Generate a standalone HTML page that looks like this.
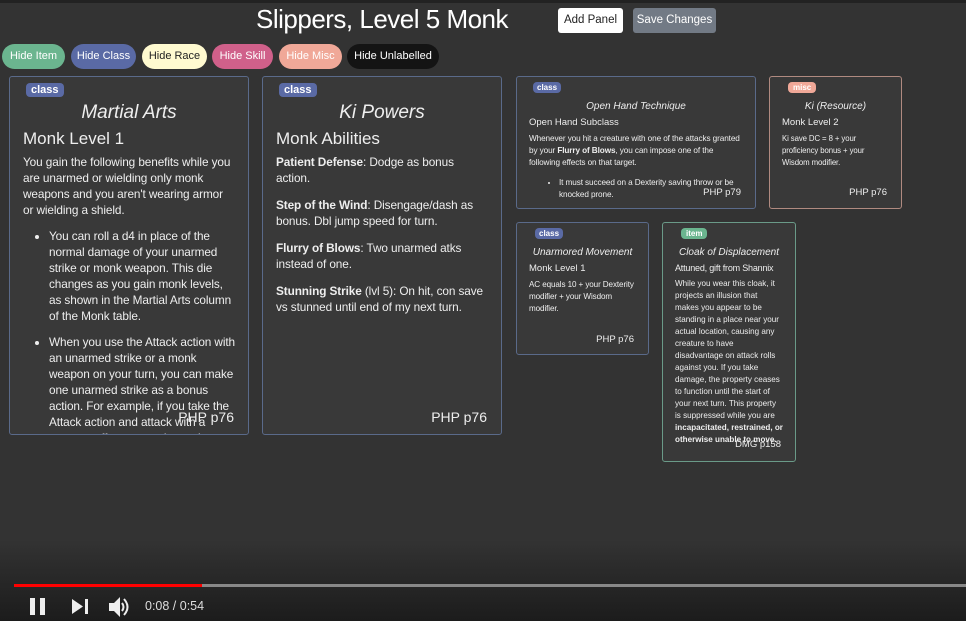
<!DOCTYPE html>
<html><head><meta charset="utf-8"><style>
*{box-sizing:border-box;margin:0;padding:0}
body{width:966px;height:621px;overflow:hidden;background:#333;font-family:"Liberation Sans",sans-serif;color:#eee;position:relative}
.top{position:absolute;left:0;top:0;width:966px;height:3px;background:#222}
h1{position:absolute;left:256px;top:4px;font-size:26px;font-weight:normal;color:#fff;letter-spacing:-0.5px}
.btn{position:absolute;top:8px;height:25px;border-radius:3px;font-size:11.5px;line-height:25px;text-align:center}
.pill{position:absolute;top:44px;height:25px;border-radius:13px;font-size:11px;line-height:25px;text-align:center}
.card{position:absolute;background:#393939;border:1px solid #5a6a8a;border-radius:3px;overflow:hidden;padding:0 14px}
.tag{display:inline-block;border-radius:4px;font-weight:bold;color:#fff;background:#5a6aa5}
.ttl{font-style:italic;text-align:center}
.ft{position:absolute;right:14px}
ul{padding-left:26px}
.big{font-size:11.8px;line-height:16px;letter-spacing:-0.1px}
.sm{font-size:7.8px;line-height:12px;letter-spacing:-0.1px}
</style></head><body>
<div class="top"></div>
<h1>Slippers, Level 5 Monk</h1>
<div class="btn" style="left:558px;width:65px;background:#fff;color:#222">Add Panel</div>
<div class="btn" style="left:633px;width:83px;background:#727a85;color:#fff">Save Changes</div>
<div class="pill" style="left:2px;width:63px;background:#6bb58f;color:#fff">Hide Item</div>
<div class="pill" style="left:71px;width:65px;background:#5a6aa5;color:#fff">Hide Class</div>
<div class="pill" style="left:142px;width:65px;background:#fffad0;color:#222">Hide Race</div>
<div class="pill" style="left:212px;width:61px;background:#d0608a;color:#fff">Hide Skill</div>
<div class="pill" style="left:279px;width:63px;background:#f0a898;color:#fff">Hide Misc</div>
<div class="pill" style="left:347px;width:92px;background:#141414;color:#fff">Hide Unlabelled</div>

<div class="card" style="left:9px;top:76px;width:240px;height:359px;padding:0 13px">
<span class="tag" style="margin:6px 0 0 3px;font-size:11px;padding:1px 5px">class</span>
<div class="ttl" style="font-size:19px;margin-top:4px">Martial Arts</div>
<div style="font-size:17px;margin-top:5px">Monk Level 1</div>
<div class="big" style="margin-top:5px">
<p>You gain the following benefits while you are unarmed or wielding only monk weapons and you aren't wearing armor or wielding a shield.</p>
<ul style="margin-top:10px"><li>You can roll a d4 in place of the normal damage of your unarmed strike or monk weapon. This die changes as you gain monk levels, as shown in the Martial Arts column of the Monk table.</li>
<li style="margin-top:10px">When you use the Attack action with an unarmed strike or a monk weapon on your turn, you can make one unarmed strike as a bonus action. For example, if you take the Attack action and attack with a quarterstaff, you can also make an unarmed strike as a bonus action, assuming you haven't.</li></ul></div>
<div class="ft" style="top:332px;font-size:14px">PHP p76</div>
</div>

<div class="card" style="left:262px;top:76px;width:240px;height:359px;padding:0 13px">
<span class="tag" style="margin:6px 0 0 3px;font-size:11px;padding:1px 5px">class</span>
<div class="ttl" style="font-size:19px;margin-top:4px">Ki Powers</div>
<div style="font-size:17px;margin-top:5px">Monk Abilities</div>
<div class="big" style="margin-top:5px">
<p><b>Patient Defense</b>: Dodge as bonus action.</p>
<p style="margin-top:11px"><b>Step of the Wind</b>: Disengage/dash as bonus. Dbl jump speed for turn.</p>
<p style="margin-top:11px"><b>Flurry of Blows</b>: Two unarmed atks instead of one.</p>
<p style="margin-top:11px"><b>Stunning Strike</b> (lvl 5): On hit, con save vs stunned until end of my next turn.</p></div>
<div class="ft" style="top:332px;font-size:14px">PHP p76</div>
</div>

<div class="card" style="left:516px;top:76px;width:240px;height:133px;padding:0 12px">
<span class="tag" style="margin:5px 0 0 4px;font-size:8px;padding:1px 4px">class</span>
<div class="ttl" style="font-size:10px;margin-top:6px">Open Hand Technique</div>
<div style="font-size:9.5px;margin-top:5px">Open Hand Subclass</div>
<div class="sm" style="margin-top:5px;font-size:8.2px"><p>Whenever you hit a creature with one of the attacks granted by your <b>Flurry of Blows</b>, you can impose one of the following effects on that target.</p>
<ul style="margin-top:8px;padding-left:30px"><li>It must succeed on a Dexterity saving throw or be knocked prone.</li></ul></div>
<div class="ft" style="top:110px;font-size:9.5px;right:14px">PHP p79</div>
</div>

<div class="card" style="left:769px;top:76px;width:133px;height:133px;border-color:#b08a80;padding:0 12px">
<span class="tag" style="margin:5px 0 0 6px;font-size:8px;padding:1px 5px;background:#f0a898">misc</span>
<div class="ttl" style="font-size:10px;margin-top:6px">Ki (Resource)</div>
<div style="font-size:9.5px;margin-top:5px">Monk Level 2</div>
<div class="sm" style="margin-top:5px">Ki save DC = 8 + your proficiency bonus + your Wisdom modifier.</div>
<div class="ft" style="top:110px;font-size:9.5px">PHP p76</div>
</div>

<div class="card" style="left:516px;top:222px;width:133px;height:133px;padding:0 12px">
<span class="tag" style="margin:5px 0 0 6px;font-size:8px;padding:1px 4px">class</span>
<div class="ttl" style="font-size:10px;margin-top:6px">Unarmored Movement</div>
<div style="font-size:9.5px;margin-top:5px">Monk Level 1</div>
<div class="sm" style="margin-top:5px;font-size:8.1px">AC equals 10 + your Dexterity modifier + your Wisdom modifier.</div>
<div class="ft" style="top:111px;font-size:9.5px">PHP p76</div>
</div>

<div class="card" style="left:662px;top:222px;width:134px;height:240px;border-color:#6a9a88;padding:0 12px">
<span class="tag" style="margin:5px 0 0 6px;font-size:8px;padding:1px 5px;background:#6bb58f">item</span>
<div class="ttl" style="font-size:10px;margin-top:6px;white-space:nowrap">Cloak of Displacement</div>
<div style="font-size:9px;margin-top:5px;white-space:nowrap;letter-spacing:-0.2px">Attuned, gift from Shannix</div>
<div class="sm" style="margin-top:5px;font-size:8.1px;letter-spacing:0">While you wear this cloak, it projects an illusion that makes you appear to be standing in a place near your actual location, causing any creature to have disadvantage on attack rolls against you. If you take damage, the property ceases to function until the start of your next turn. This property is suppressed while you are <b>incapacitated, restrained, or otherwise unable to move.</b></div>
<div class="ft" style="top:216px;font-size:9.5px">DMG p158</div>
</div>

<div style="position:absolute;left:0;top:540px;width:966px;height:81px;background:linear-gradient(#33333300,#1c1c1c)"></div>
<div style="position:absolute;left:14px;top:584px;width:952px;height:3px;background:#888"></div>
<div style="position:absolute;left:14px;top:584px;width:188px;height:3px;background:#f00"></div>
<div style="position:absolute;left:30px;top:598px;width:5px;height:17px;background:#eee"></div>
<div style="position:absolute;left:40px;top:598px;width:5px;height:17px;background:#eee"></div>
<svg style="position:absolute;left:72px;top:599px" width="16" height="15"><path d="M0 0L11 7.5L0 15Z" fill="#eee"/><rect x="13" y="0" width="3" height="15" fill="#eee"/></svg>
<svg style="position:absolute;left:108px;top:596px" width="22" height="22"><path d="M1 7H6L12 1V21L6 15H1Z" fill="#eee"/><path d="M14 7Q17 11 14 15" stroke="#eee" stroke-width="2" fill="none"/><path d="M16 3Q23 11 16 19" stroke="#eee" stroke-width="2" fill="none"/></svg>
<div style="position:absolute;left:145px;top:599px;font-size:12.5px;color:#ddd">0:08 / 0:54</div>
</body></html>
